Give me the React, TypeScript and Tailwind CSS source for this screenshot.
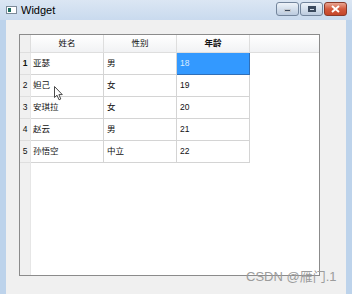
import React from 'react';

const rows = [
  { name: '亚瑟', sex: '男', age: '18' },
  { name: '妲己', sex: '女', age: '19' },
  { name: '安琪拉', sex: '女', age: '20' },
  { name: '赵云', sex: '男', age: '21' },
  { name: '孙悟空', sex: '中立', age: '22' },
];

const font = { fontFamily: '"Liberation Sans", "Noto Sans CJK SC", sans-serif' };

function TitleButton({ kind }: { kind: 'min' | 'max' | 'close' }) {
  const isClose = kind === 'close';
  return (
    <div
      className={`flex items-center justify-center h-[14px] rounded-[3px] border ${
        isClose
          ? 'w-[23px] border-[#8a3a2a] bg-gradient-to-b from-[#e8a593] via-[#d3593c] to-[#c4462a]'
          : 'w-[23px] border-[#73859c] bg-gradient-to-b from-[#eef3f9] via-[#d4dfec] to-[#bccbdf]'
      }`}
    >
      {kind === 'min' && <div className="w-[7px] h-[3px] bg-[#3b4a5e] mt-[4px] border border-white/70" />}
      {kind === 'max' && <div className="w-[8px] h-[6px] border-[2px] border-t-[3px] border-[#3b4a5e]" />}
      {isClose && (
        <svg width="9" height="8" viewBox="0 0 9 8">
          <path d="M1 1 L8 7 M8 1 L1 7" stroke="#ffffff" strokeWidth="2" />
        </svg>
      )}
    </div>
  );
}

export default function App() {
  return (
    <div className="relative w-[352px] h-[294px] overflow-hidden flex flex-col bg-[#bdd3eb]" style={font}>
      {/* title bar */}
      <div className="h-[20px] flex items-center pl-[6px] pr-[5px] bg-gradient-to-b from-[#dbe6f3] to-[#c9daee]">
        <div className="w-[11px] h-[8px] bg-white border border-[#7d8a99] flex items-center pl-[1px]">
          <div className="w-[3px] h-[4px] bg-[#1f6f63]" />
        </div>
        <span className="ml-[4px] text-[11px] text-black leading-none">Widget</span>
        <div className="ml-auto flex gap-[1px] items-center -mt-[3px]">
          <TitleButton kind="min" />
          <TitleButton kind="max" />
          <TitleButton kind="close" />
        </div>
      </div>

      {/* client area */}
      <div className="flex-1 mx-[6px] bg-[#f0f0f0] pt-[14px] pl-[13px]">
        <div className="w-[301px] h-[242px] border border-[#8b8b8b] bg-white flex flex-col text-[8.5px] text-[#111]">
          {/* horizontal header */}
          <div className="flex h-[18px] bg-gradient-to-b from-[#ffffff] to-[#f1f2f4] border-b border-[#dedede]">
            <div className="w-[11px] bg-[#f0f0f0] border-r border-[#dedede]" />
            <div className="w-[73px] flex items-center justify-center border-r border-[#dedede]">姓名</div>
            <div className="w-[73px] flex items-center justify-center border-r border-[#dedede]">性别</div>
            <div className="w-[73px] flex items-center justify-center border-r border-[#dedede] font-bold">年龄</div>
            <div className="flex-1" />
          </div>
          <div className="flex flex-1">
            {/* vertical header */}
            <div className="w-[11px] bg-[#f0f0f0] border-r border-[#e6e6e6] flex flex-col">
              {rows.map((r, i) => (
                <div
                  key={r.age}
                  className={`h-[22px] flex items-center justify-center border-b border-[#dedede] ${i === 0 ? 'font-bold' : ''}`}
                >
                  {i + 1}
                </div>
              ))}
            </div>
            {/* cells */}
            <div className="flex flex-col">
              {rows.map((r, i) => (
                <div key={r.age} className="flex h-[22px]">
                  <div className="w-[73px] flex items-center pl-[2px] border-r border-b border-[#d4d4d4]">{r.name}</div>
                  <div className="w-[73px] flex items-center pl-[3px] border-r border-b border-[#d4d4d4]">{r.sex}</div>
                  <div
                    className={`w-[73px] flex items-center pl-[3px] border-r border-b ${
                      i === 0 ? 'bg-[#3399ff] text-[#d9ecff] border-[#2f6fb8]' : 'border-[#d4d4d4]'
                    }`}
                  >
                    {r.age}
                  </div>
                </div>
              ))}
            </div>
          </div>
        </div>
      </div>

      {/* mouse cursor */}
      <svg className="absolute left-[54px] top-[86px]" width="10" height="15" viewBox="0 0 10 15">
        <path d="M0.5 0.5 L0.5 11.5 L3 9.2 L5 13.8 L6.8 13 L4.9 8.6 L8.3 8.6 Z" fill="#ffffff" stroke="#4a4a4a" strokeWidth="1" />
      </svg>

      {/* watermark */}
      <div className="absolute left-[246px] top-[270px] text-[13px] text-[#9c9c9c] leading-none whitespace-nowrap">
        CSDN @雁门.1
      </div>
    </div>
  );
}
